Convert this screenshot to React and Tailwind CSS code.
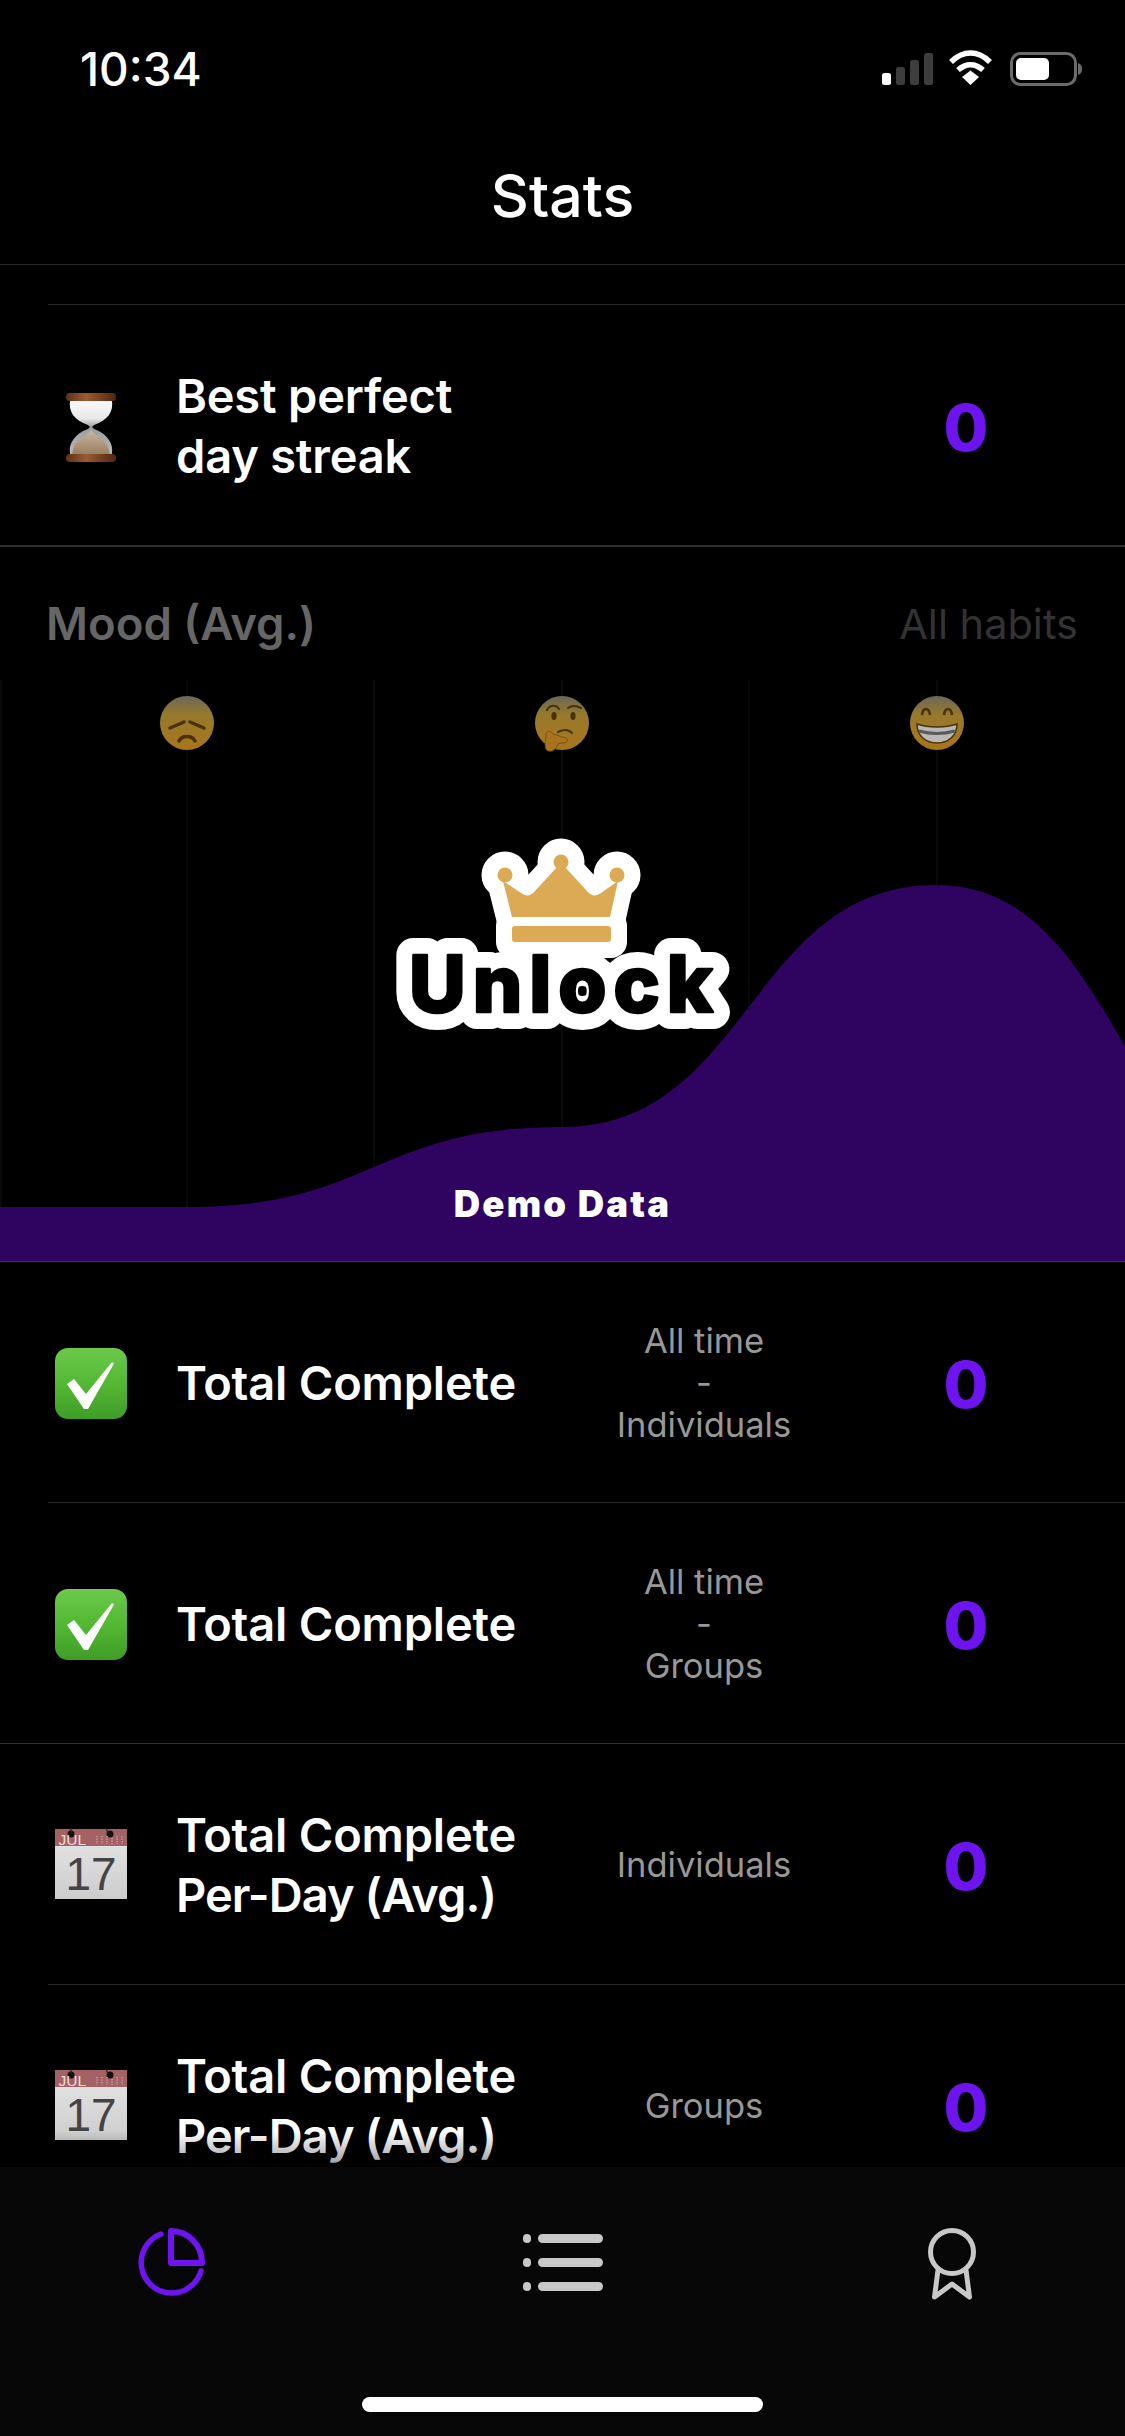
import React from "react";

const font = "font-['Inter','Liberation_Sans',sans-serif]";

function StatusBar() {
  return (
    <div className="flex h-[138px] items-center justify-between pl-[80px] pr-[43px]">
      <span className="text-[46px] font-medium leading-none text-white">10:34</span>
      <svg width="200" height="40" viewBox="882 49 200 40" className="block">
        <rect x="882" y="73" width="9" height="12" rx="2.5" fill="#fff" />
        <rect x="896" y="67" width="9" height="18" rx="2.5" fill="#3d3d3d" />
        <rect x="910" y="60" width="9" height="25" rx="2.5" fill="#3d3d3d" />
        <rect x="924" y="53" width="9" height="32" rx="2.5" fill="#3d3d3d" />
        <path d="M951 62 C963 50 978 50 990 62" fill="none" stroke="#fff" strokeWidth="5.5" />
        <path d="M958 70 C966 63 975 63 983 70" fill="none" stroke="#fff" strokeWidth="5.5" />
        <path d="M962 77 L970.5 70.5 L979 77 L970.5 85 Z" fill="#fff" />
        <rect x="1011.5" y="53.5" width="64" height="31" rx="9" fill="none" stroke="#6b6b6b" strokeWidth="3" />
        <rect x="1016" y="58" width="33" height="22" rx="5" fill="#fff" />
        <path d="M1078 63 C1081 64 1082 66 1082 69 C1082 72 1081 74 1078 75 Z" fill="#6b6b6b" />
      </svg>
    </div>
  );
}

function Hourglass() {
  return (
    <svg width="50" height="70" viewBox="0 0 48 70" preserveAspectRatio="none" className="block">
      <defs>
        <linearGradient id="wood" x1="0" y1="0" x2="1" y2="0">
          <stop offset="0" stopColor="#5d3016" />
          <stop offset="0.4" stopColor="#9a5c32" />
          <stop offset="1" stopColor="#4e2710" />
        </linearGradient>
        <linearGradient id="glass" x1="0" y1="0" x2="0" y2="1">
          <stop offset="0" stopColor="#fafafa" />
          <stop offset="0.35" stopColor="#e8e8e8" />
          <stop offset="0.5" stopColor="#9c9c9c" />
          <stop offset="1" stopColor="#b9b9b9" />
        </linearGradient>
        <linearGradient id="sand" x1="0" y1="0" x2="0" y2="1">
          <stop offset="0" stopColor="#c9b9a5" />
          <stop offset="1" stopColor="#9a8062" />
        </linearGradient>
      </defs>
      <path d="M4 8 C2 20 8 28 21 33 L23 35 L21 37 C8 42 2 52 4 62 H44 C46 52 40 42 27 37 L25 35 L27 33 C40 28 46 20 44 8 Z" fill="url(#glass)" />
      <path d="M24 37 C25 44 41 46 42 62 H6 C7 46 23 44 24 37 Z" fill="url(#sand)" />
      <rect x="0" y="1" width="48" height="8" rx="3.5" fill="url(#wood)" />
      <rect x="0" y="62" width="48" height="8" rx="3.5" fill="url(#wood)" />
    </svg>
  );
}

function CheckBox({ id }) {
  return (
    <svg width="72" height="71" viewBox="0 0 72 71" className="block">
      <defs>
        <linearGradient id={id} x1="0" y1="0" x2="0" y2="1">
          <stop offset="0" stopColor="#6cc94c" />
          <stop offset="0.5" stopColor="#53b832" />
          <stop offset="1" stopColor="#3f9d28" />
        </linearGradient>
      </defs>
      <rect width="72" height="71" rx="13" fill={`url(#${id})`} />
      <path d="M12 36 L19 31 L31 46 L57 14 L59 15.5 L33 61 H29 Z" fill="#fff" />
    </svg>
  );
}

function CalendarIcon({ id }) {
  return (
    <svg width="72" height="72" viewBox="0 0 72 72" className="-mt-[3px] block">
      <defs>
        <linearGradient id={id} x1="0" y1="0" x2="0" y2="1">
          <stop offset="0" stopColor="#e0e0e0" />
          <stop offset="1" stopColor="#cdcdcd" />
        </linearGradient>
      </defs>
      <rect y="1" width="72" height="17" fill="#a46265" />
      <rect y="18" width="72" height="53" fill={`url(#${id})`} />
      <circle cx="16" cy="6" r="3.5" fill="#111" />
      <circle cx="55" cy="6" r="3.5" fill="#111" />
      <path d="M16 0 V5 M51 0 L53 5" stroke="#222" strokeWidth="1.2" />
      <text x="3.5" y="16.5" fontSize="15.5" fontFamily="Liberation Sans" fill="#f0dcdc">JUL</text>
      <path d="M42 8 V16 M47 8 V16 M52 8 V16 M57 10 V16 M62 8 V16 M67 8 V16" stroke="#bd8e8f" strokeWidth="2" strokeDasharray="1.2 1.3" />
      <text x="36" y="62" textAnchor="middle" fontSize="46" fontFamily="Liberation Sans" fill="#444">17</text>
    </svg>
  );
}

function FaceDefs() {
  return (
    <linearGradient id="faceFill" x1="0" y1="0" x2="0" y2="1">
      <stop offset="0" stopColor="#6b675a" />
      <stop offset="0.35" stopColor="#967a2c" />
      <stop offset="1" stopColor="#a9761a" />
    </linearGradient>
  );
}

function MoodChart() {
  const curve = "M0 527 H187 C374.5 527 374.5 447 562 447 C749.5 447 749.5 205 937 205 C1125 205 1125 527 1312 527 V581 H0 Z";
  return (
    <svg width="1125" height="581" viewBox="0 0 1125 581" className="block">
      <defs>
        <FaceDefs />
      </defs>
      {[1, 187, 374, 562, 749, 937].map((x) => (
        <line key={x} x1={x} x2={x} y1="0" y2="540" stroke="#131313" strokeWidth="1" />
      ))}
      <path d={curve} fill="#2e0460" />

      {/* sad */}
      <circle cx="187" cy="43" r="27" fill="url(#faceFill)" />
      <path d="M170 48 L184 42 M204 48 L190 42" stroke="#4a3208" strokeWidth="3.5" strokeLinecap="round" />
      <path d="M179 61 C182 55 192 55 195 61" stroke="#4a3208" strokeWidth="3.5" fill="none" strokeLinecap="round" />

      {/* thinking */}
      <circle cx="562" cy="43" r="27" fill="url(#faceFill)" />
      <path d="M547 30 C550 24 557 25 559 29 M568 28 C572 25 577 26 581 28" stroke="#4a3208" strokeWidth="2" fill="none" strokeLinecap="round" />
      <ellipse cx="554" cy="36" rx="2.6" ry="4" fill="#4a3208" />
      <ellipse cx="573" cy="36" rx="2.6" ry="4" fill="#4a3208" />
      <path d="M558 52 C564 49 569 50 572 53" stroke="#4a3208" strokeWidth="2" fill="none" strokeLinecap="round" />
      <path d="M546 54 C546 51 551 50 553 54 L566 58 C570 60 566 64 562 63 L558 64 C556 70 552 72 548 71 C543 69 546 60 546 54 Z" fill="#a8731e" stroke="#6f4c12" strokeWidth="0.8" />

      {/* grin */}
      <circle cx="937" cy="43" r="27" fill="url(#faceFill)" />
      <path d="M922 35 C923 27 929 27 930 35 M944 35 C945 27 951 27 952 35" stroke="#4a3208" strokeWidth="2.5" fill="none" />
      <path d="M917 44 C928 48 946 48 957 44 C957 56 948 63 937 63 C926 63 917 56 917 44 Z" fill="#b9b9b9" stroke="#4a3208" strokeWidth="1.5" />
      <path d="M919 51 C930 54 944 54 955 51" stroke="#5a5a5a" strokeWidth="3" fill="none" />
    </svg>
  );
}

function UnlockLogo() {
  const crown = "M512 917 L503 881 L521 893 C526 897 531 896 535 891 L557 867 C559 864 563 864 565 867 L587 891 C591 896 596 897 601 893 L618 881 L610 917 Z";
  const word = { x: 561, y: 1012, textAnchor: "middle", fontSize: 78, fontWeight: 800, fontFamily: "Inter", textLength: 304, lengthAdjust: "spacing" };
  return (
    <svg
      width="360"
      height="210"
      viewBox="380 830 360 210"
      className="absolute left-[380px] top-[283px] block"
    >
      <g fill="#fff" stroke="#fff" strokeWidth="32" strokeLinejoin="round" strokeLinecap="round">
        <path d={crown} />
        <circle cx="505" cy="875" r="7.5" />
        <circle cx="561" cy="862" r="7.5" />
        <circle cx="617" cy="875" r="7.5" />
        <rect x="512" y="926" width="99" height="16" />
      </g>
      <text {...word} fill="#fff" stroke="#fff" strokeWidth="34" strokeLinejoin="round">Unlock</text>
      <g fill="#dcaa55">
        <path d={crown} />
        <circle cx="505" cy="875" r="7.5" />
        <circle cx="561" cy="862" r="7.5" />
        <circle cx="617" cy="875" r="7.5" />
        <rect x="512" y="926" width="99" height="16" rx="3" />
      </g>
      {/* white first so the counters of the letters stay open */}
      <text {...word} fill="#000" stroke="#000" strokeWidth="2.5" strokeLinejoin="round">Unlock</text>
    </svg>
  );
}

function StatRow({ icon, label, note, border }) {
  return (
    <div className={border}>
      <div className="grid h-[240px] grid-cols-[130px_400px_252px_272px] items-center">
        <div className="flex w-[86px] justify-center pt-[3px]">{icon}</div>
        <div className="-ml-[2px] pt-[1px] text-[47px] font-semibold leading-[60px] tracking-[-0.2px] text-white">{label}</div>
        <div className="pt-[1px] text-center text-[34.5px] leading-[42px] text-[#989898]">{note}</div>
        <div className="pt-[4px] text-center text-[65px] font-extrabold leading-none text-[#6d14f0]">0</div>
      </div>
    </div>
  );
}

function TabBar() {
  return (
    <div className="grid h-[269px] grid-cols-[342px_441px_338px] justify-items-center bg-[#070707] pt-[59px]">
      <svg width="70" height="70" viewBox="0 0 70 70" className="block">
        <path d="M25 8 A30.5 30.5 0 1 0 65 45" fill="none" stroke="#6d14f0" strokeWidth="5.5" strokeLinecap="round" />
        <path d="M35 5 C52 5 66 19 66 37 H35 Z" fill="none" stroke="#6d14f0" strokeWidth="6" strokeLinejoin="round" />
      </svg>
      <svg width="80" height="62" viewBox="0 0 80 62" className="mt-[6px] block" fill="#c8c8c8">
        <rect x="0" y="2" width="8" height="9" rx="4" />
        <rect x="15" y="2" width="65" height="9" rx="4.5" />
        <rect x="0" y="26" width="8" height="9" rx="4" />
        <rect x="15" y="26" width="65" height="9" rx="4.5" />
        <rect x="0" y="50" width="8" height="9" rx="4" />
        <rect x="15" y="50" width="65" height="9" rx="4.5" />
      </svg>
      <svg width="54" height="76" viewBox="0 0 54 76" className="block" fill="none" stroke="#c8c8c8" strokeWidth="5">
        <circle cx="27" cy="26" r="21.5" />
        <path d="M13 44 L9.5 71 L27 58 L44.5 71 L41 44" strokeLinejoin="round" />
      </svg>
    </div>
  );
}

const perDay = (
  <>
    Total Complete
    <br />
    <span className="tracking-[-0.95px]">Per-Day (Avg.)</span>
  </>
);

export default function App() {
  return (
    <div className={`${font} relative flex h-[2436px] w-[1125px] flex-col overflow-hidden bg-black`}>
      <header className="h-[265px] border-b border-[#2a2a2a]">
        <StatusBar />
        <h1 className="flex h-[114px] items-center justify-center text-[59px] font-medium leading-none text-white">
          Stats
        </h1>
      </header>

      <main className="relative flex-1 overflow-hidden">
        <div className="ml-[48px] h-[40px] border-b border-[#2a2a2a]" />
        <div className="border-b-2 border-[#2f2f2f] pl-[48px]">
          <StatRow icon={<Hourglass />} label={<>Best perfect<br />day streak</>} />
        </div>

        <section className="relative border-b border-[#3a3a3a]">
          <div className="flex h-[133px] items-center justify-between pl-[46px] pr-[47px] pt-[22px]">
            <span className="text-[45.5px] font-semibold text-[#666666]">Mood (Avg.)</span>
            <span className="text-[41.5px] text-[#333333]">All habits</span>
          </div>
          <MoodChart />
          <UnlockLogo />
          <div className="absolute bottom-[37px] left-0 right-0 text-center text-[36.5px] font-black leading-[40px] tracking-[2.2px] text-white">
            Demo Data
          </div>
        </section>

        <div className="pl-[48px]">
          <StatRow
            border="border-b border-[#2a2a2a]"
            icon={<CheckBox id="checkA" />}
            label="Total Complete"
            note={<>All time<br />-<br />Individuals</>}
          />
        </div>
        <div className="border-b border-[#2f2f2f] pl-[48px]">
          <StatRow
            icon={<CheckBox id="checkB" />}
            label="Total Complete"
            note={<>All time<br />-<br />Groups</>}
          />
        </div>
        <div className="pl-[48px]">
          <StatRow
            border="border-b border-[#2a2a2a]"
            icon={<CalendarIcon id="calA" />}
            label={perDay}
            note="Individuals"
          />
          <StatRow
            icon={<CalendarIcon id="calB" />}
            label={perDay}
            note="Groups"
          />
        </div>

        <div className="absolute bottom-0 left-0 right-0 h-[36px] bg-gradient-to-b from-transparent to-black/40" />
      </main>

      <TabBar />

      <div className="absolute bottom-[24px] left-[362px] h-[15px] w-[401px] rounded-full bg-white" />
    </div>
  );
}
